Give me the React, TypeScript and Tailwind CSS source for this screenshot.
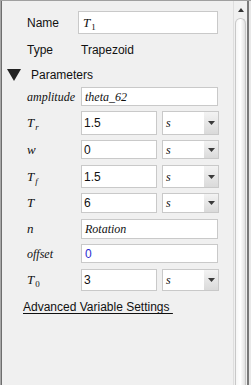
import React from 'react';

// Fila de parámetro: etiqueta en cursiva + campo(s)
type Row = {
  label: React.ReactNode;
  value: React.ReactNode;
  unit?: boolean;
  h: string;
  mt: string;
};

function Sub({ t, s, ital }: { t: string; s: string; ital?: boolean }) {
  return (
    <span className="font-['Liberation_Serif',serif]">
      <span className="italic text-[13px]">{t}</span>
      <span className={`text-[9px] relative top-[3px] ml-[1px] ${ital ? 'italic' : ''}`}>{s}</span>
    </span>
  );
}

function Unidad() {
  return (
    <div className="ml-[5px] w-[57px] h-full flex border border-[#c9c9c9] bg-white">
      <div className="flex-1 pl-[3px] flex items-center italic text-[12px] font-['Liberation_Serif',serif]">s</div>
      <div className="w-[14px] bg-linear-to-b from-[#f3f3f3] to-[#dadada] flex items-center justify-center">
        <svg width="7" height="4" viewBox="0 0 7 4">
          <path d="M0 0h7L3.5 4z" fill="#3a3a3a" />
        </svg>
      </div>
    </div>
  );
}

export default function App() {
  const serifItal = "italic text-[12px] font-['Liberation_Serif',serif]";
  const filas: Row[] = [
    { label: <span className={serifItal}>amplitude</span>, value: <span className={serifItal}>theta_62</span>, h: 'h-[19px]', mt: 'mt-[4px]' },
    { label: <Sub t="T" s="r" ital />, value: '1.5', unit: true, h: 'h-[24px]', mt: 'mt-[5px]' },
    { label: <span className="italic text-[13px] font-['Liberation_Serif',serif]">w</span>, value: '0', unit: true, h: 'h-[19px]', mt: 'mt-[5px]' },
    { label: <Sub t="T" s="f" ital />, value: '1.5', unit: true, h: 'h-[23px]', mt: 'mt-[6px]' },
    { label: <span className="italic text-[13px] font-['Liberation_Serif',serif]">T</span>, value: '6', unit: true, h: 'h-[20px]', mt: 'mt-[5px]' },
    { label: <span className="italic text-[13px] font-['Liberation_Serif',serif]">n</span>, value: <span className={serifItal}>Rotation</span>, h: 'h-[20px]', mt: 'mt-[6px]' },
    { label: <span className={serifItal}>offset</span>, value: <span className="text-[#2b2bd0]">0</span>, h: 'h-[19px]', mt: 'mt-[5px]' },
    { label: <Sub t="T" s="0" />, value: '3', unit: true, h: 'h-[22px]', mt: 'mt-[6px]' },
  ];

  return (
    <div className="w-[251px] h-[385px] bg-[#f0f0f0] flex border-t border-[#a0a0a0] overflow-hidden text-[12px] text-[#111] font-['Liberation_Sans',Arial,sans-serif]">
      {/* Borde izquierdo */}
      <div className="w-[1px] bg-[#a8a8a8]" />
      <div className="w-[1px] bg-[#6e6e6e]" />

      {/* Contenido */}
      <div className="w-[231px] pt-[10px] flex flex-col">
        {/* Nombre */}
        <div className="h-[23px] flex items-center pl-[25px]">
          <span className="w-[51px]">Name</span>
          <div className="w-[140px] h-full border border-[#c9c9c9] bg-white flex items-center pl-[4px]">
            <Sub t="T" s="1" />
          </div>
        </div>

        {/* Tipo */}
        <div className="h-[20px] mt-[6px] flex items-center pl-[25px]">
          <span className="w-[54px]">Type</span>
          <span>Trapezoid</span>
        </div>

        {/* Parámetros */}
        <div className="h-[16px] mt-[7px] flex items-center pl-[5px]">
          <svg width="14" height="12" viewBox="0 0 14 12">
            <path d="M0 0h14L7 12z" fill="#222" />
          </svg>
          <span className="ml-[10px]">Parameters</span>
        </div>

        {filas.map((f, i) => (
          <div key={i} className={`flex items-center pl-[25px] ${f.h} ${f.mt}`}>
            <div className="w-[54px]">{f.label}</div>
            {f.unit ? (
              <>
                <div className="w-[76px] h-full border border-[#c9c9c9] bg-white flex items-center pl-[2px]">{f.value}</div>
                <Unidad />
              </>
            ) : (
              <div className="w-[137px] h-full border border-[#c9c9c9] bg-white flex items-center pl-[3px]">{f.value}</div>
            )}
          </div>
        ))}

        {/* Enlace */}
        <div className="h-[14px] mt-[9px] pl-[21px] flex items-center">
          <span className="underline underline-offset-[2px]">Advanced Variable Settings&nbsp;</span>
        </div>
      </div>

      {/* Barra de desplazamiento */}
      <div className="w-[14px] border-l border-[#dedede] flex flex-col items-center">
        <svg width="6" height="4" viewBox="0 0 6 4" className="mt-[7px]">
          <path d="M0 4h6L3 0z" fill="#333" />
        </svg>
        <div className="mt-[6px] w-[11px] flex-1 rounded-t-full border-l border-r border-t border-[#c8c8c8] bg-linear-to-r from-[#f6f6f6] via-white to-[#e2e2e2]" />
      </div>

      {/* Borde derecho */}
      <div className="w-[2px] bg-[#7a7a7a]" />
      <div className="w-[2px] bg-[#e8e8e8]" />
    </div>
  );
}
